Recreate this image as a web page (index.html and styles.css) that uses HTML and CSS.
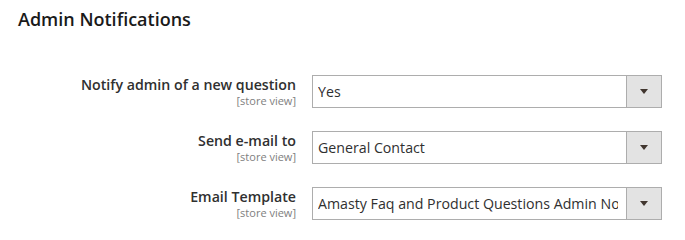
FILE: index.html
```html
<!DOCTYPE html>
<html lang="en">
<head>
  <meta charset="UTF-8" />
  <title>Admin Notifications</title>
  <link rel="stylesheet" href="styles.css">
</head>
<body>

  <h2 class="section-title">Admin Notifications</h2>

  <div class="fields">
    <div class="field">
      <div class="label">
        <span class="label-text">Notify admin of a new question</span>
        <span class="scope">[store view]</span>
      </div>
      <div class="select">
        <span class="value">Yes</span>
        <span class="arrow"></span>
      </div>
    </div>

    <div class="field">
      <div class="label">
        <span class="label-text">Send e-mail to</span>
        <span class="scope">[store view]</span>
      </div>
      <div class="select">
        <span class="value">General Contact</span>
        <span class="arrow"></span>
      </div>
    </div>

    <div class="field">
      <div class="label">
        <span class="label-text">Email Template</span>
        <span class="scope">[store view]</span>
      </div>
      <div class="select">
        <span class="value">Amasty Faq and Product Questions Admin Notification (Default)</span>
        <span class="arrow"></span>
      </div>
    </div>
  </div>

</body>
</html>
```

FILE: styles.css
```css
body {
  margin: 0;
  padding: 0 18px;
  font-family: "Open Sans", sans-serif;
  color: #303030;
  background: #fff;
}

.section-title {
  font-size: 18px;
  font-weight: 600;
  color: #1a1a1a;
  margin: 0;
  padding-top: 7px;
  line-height: 25px;
}

.fields {
  display: grid;
  gap: 23px;
  margin-top: 43px;
}

.field {
  display: flex;
  align-items: flex-start;
}

.label {
  width: 278px;
  display: flex;
  flex-direction: column;
  align-items: flex-end;
  padding-right: 16px;
}

.label-text {
  font-size: 14.2px;
  font-weight: 600;
  color: #303030;
  line-height: 19px;
}

.scope {
  font-size: 11px;
  color: #808080;
  line-height: 14px;
}

.select {
  width: 348px;
  height: 31px;
  border: 1px solid #adadad;
  display: flex;
  align-items: center;
  background: #fff;
}

.value {
  flex: 1;
  font-size: 14.2px;
  margin-left: 5px;
  margin-right: 8px;
  white-space: nowrap;
  overflow: hidden;
  color: #303030;
}

.arrow {
  width: 34px;
  height: 100%;
  background: #e3e3e3;
  border-left: 1px solid #adadad;
  position: relative;
}

.arrow::after {
  content: "";
  position: absolute;
  left: 13px;
  top: 13px;
  border-left: 4px solid transparent;
  border-right: 4px solid transparent;
  border-top: 5px solid #41362f;
}
```
